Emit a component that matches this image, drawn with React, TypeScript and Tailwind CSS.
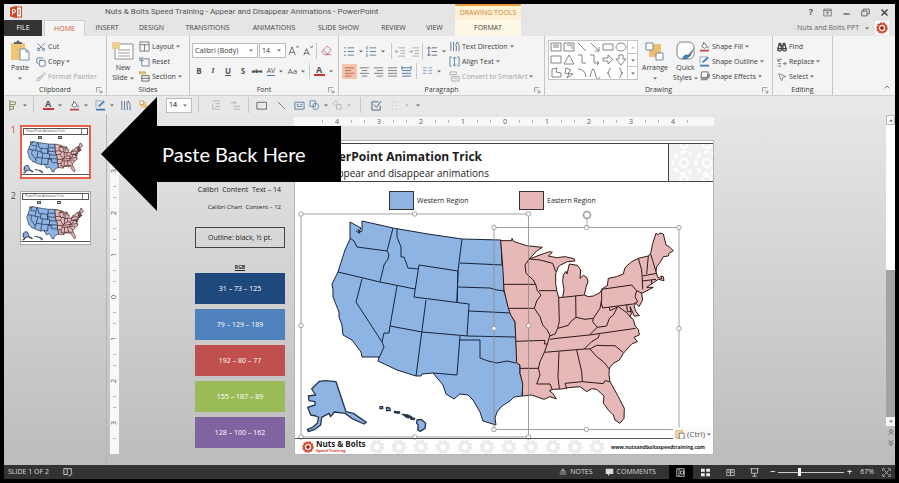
import React from 'react';
import { Binoculars, Brush, ChevronUp, Copy, Eraser, MousePointer2, Scissors } from 'lucide-react';

const TABS = ["INSERT", "DESIGN", "TRANSITIONS", "ANIMATIONS", "SLIDE SHOW", "REVIEW", "VIEW"];
const TAB_WIDTHS = ["w-[44px]", "w-[45px]", "w-[67px]", "w-[66px]", "w-[63px]", "w-[47px]", "w-[35px]"];

const SWATCHES = [
  { label: "31 – 73 – 125", color: "bg-[#1f497d]" },
  { label: "79 – 129 – 189", color: "bg-[#4f81bd]" },
  { label: "192 – 80 – 77", color: "bg-[#c0504d]" },
  { label: "155 – 187 – 89", color: "bg-[#9bbb59]" },
  { label: "128 – 100 – 162", color: "bg-[#8064a2]" }
];

const WEST_OUTLINE =
  "M350,222 L361,228 359,232 362,231 362,221 393,228 428,234 462,239 501,240 502,264 504,266 504,291 508,305 511,315 515,322 516,337 517,363 520,365 520,373 523,383 522,396 514,397 510,401 502,406 497,412 495,418 496,425 483,421 480,412 473,400 468,395 460,394 454,399 446,394 443,385 433,373 422,374 421,376 416,376 397,370 378,361 379,357 362,357 361,352 352,340 343,335 342,325 339,317 339,312 337,307 333,297 333,290 332,284 338,272 345,250 350,239 Z";

const WEST_BORDERS = [
  "M350,238 L354,241 357,247 372,249 387,251",
  "M393,228 L387,251 389,254 388,259 384,265 380,282",
  "M338,272 L380,282 415,289",
  "M362,279 L356,302 382,342",
  "M397,286 L390,326 389,333 384,333 382,342 384,347 379,358",
  "M390,326 L422,332 468,336 515,337",
  "M426,300 L416,376",
  "M397,229 L397,237 401,247 401,257 404,257 408,268 418,269",
  "M419,265 L458,271 457,302 M419,265 L414,297 469,304 467,336",
  "M462,239 L458,271",
  "M460,263 L503,265",
  "M458,287 L490,288 497,290 504,291",
  "M469,311 L511,313",
  "M460,336 L457,375 433,373",
  "M460,340 L480,340 480,358 488,361 497,363 507,361 516,363",
  "M458,271 L457,302",
  "M358,229 L360,234 M356,231 L359,233"
];

const EAST_OUTLINE =
  "M32,122 L65,122 66,115 70,124 88,130 110,137 157,142 140,153 118,177 150,165 178,155 187,157 175,168 200,173 225,170 252,176 255,183 232,185 212,195 205,200 200,214 197,220 197,250 201,275 206,292 218,292 222,270 218,245 220,225 228,214 231,222 238,192 262,196 272,210 270,235 280,226 290,232 294,245 288,262 283,285 295,290 310,288 330,278 337,266 352,257 355,235 380,230 400,222 405,203 425,185 445,175 475,168 482,160 488,130 498,100 505,104 510,99 520,102 528,135 537,140 550,152 537,160 535,168 520,170 512,185 500,200 498,215 503,232 515,236 512,228 520,230 522,242 505,238 490,248 470,262 490,262 465,275 455,280 458,300 447,320 438,310 432,318 438,335 448,347 432,348 425,330 420,320 424,342 420,350 430,358 435,378 445,388 448,405 432,412 442,425 425,432 400,460 388,480 370,490 358,505 357,525 360,545 385,590 403,625 402,655 390,670 375,660 370,645 355,630 340,610 342,588 320,568 305,566 290,575 270,560 235,563 215,567 190,568 178,572 188,580 199,597 180,590 162,598 125,585 97,588 98,550 90,520 90,495 80,488 77,410 75,365 62,345 55,325 42,270 38,195 Z";

const EAST_BORDERS = [
  "M40,253 L137,253 M55,325 L133,325 M77,424 L165,421 163,432 172,432 M90,505 L145,505",
  "M118,177 L105,195 108,220 130,240 137,253 142,272 153,285 140,303 133,325 150,350 158,375 170,388 180,405 172,432 163,457 150,485 145,505 150,525 140,552 180,552 187,570",
  "M118,177 L150,180 188,190 197,215 M147,272 L200,272",
  "M206,292 L208,365 203,385 195,402 180,408 M257,287 L258,352 M218,292 L283,285",
  "M335,268 L335,300 330,325 310,355 308,365 322,382 298,405",
  "M203,385 L235,376 242,365 258,352 285,358 310,355",
  "M335,268 L425,255 440,272 435,290 443,305 430,312 338,324 333,305 M440,272 L457,280",
  "M445,175 L455,210 457,240 458,268 M475,168 L470,222 M482,162 L498,215",
  "M457,228 L500,220 M457,243 L498,238 M485,240 L485,253",
  "M322,382 L350,378 358,355 370,345 382,322 M358,322 L360,332 385,320 410,338 425,355 M410,312 L412,335 425,335",
  "M180,418 L200,415 298,405 437,385",
  "M163,457 L283,447 300,447 320,436 345,437 375,437 400,458 M283,447 L305,425 325,413 328,403",
  "M300,447 L320,470 340,485 358,507 M207,455 L204,530 208,567 M260,450 L275,515 277,545",
  "M230,565 L225,550 277,545 340,551 345,542 360,545"
];

function StatesMap({ weight = 1 }: { weight?: number }) {
  return (
    <g strokeLinejoin="round">
      <g fill="#8eb4e3" stroke="#17243a" strokeWidth={weight}>
        <path d={WEST_OUTLINE} />
        {WEST_BORDERS.map((d) => <path key={d} d={d} fill="none" />)}
      </g>
      <g transform="translate(490 200) scale(.33333)" fill="#e6b9b8" stroke="#2e1717" strokeWidth={weight * 3}>
        <path d={EAST_OUTLINE} />
        {EAST_BORDERS.map((d) => <path key={d} d={d} fill="none" />)}
      </g>
      {/* Alaska and Hawaii */}
      <g transform="translate(290 290) scale(.33333)" fill="#8eb4e3" stroke="#24344d" strokeWidth={weight * 4}>
        <path d="M88,274 L105,272 138,275 168,365 190,370 229,397 222,402 185,385 165,370 133,366 122,380 117,370 95,382 92,405 75,418 55,425 52,418 68,412 82,400 86,382 78,378 62,375 53,352 75,345 75,335 57,332 55,318 77,315 65,297 Z" />
        <path d="M270,350h8v6h-8zM289,352l10,2 2,8-11,0zM313,364l16,2-2,4-13-2zM337,373l16,2-3,4zM345,379l12,0-2,5zM357,376l14,10-8,2zM364,385l10,0-2,4zM381,390l12-2 14,12-2,15-15,9-7,-5 2-13-5-7z" />
      </g>
    </g>
  );
}

function Selection({ x, y, w, h }: { x: number; y: number; w: number; h: number }) {
  const handles = [[0, 0], [w / 2, 0], [w, 0], [0, h / 2], [w, h / 2], [0, h], [w / 2, h], [w, h]];
  return (
    <g transform={`translate(${x} ${y})`} fill="none" stroke="#8a8a8a" strokeWidth="0.8">
      <rect width={w} height={h} />
      {handles.map(([hx, hy], i) => <circle key={i} cx={hx} cy={hy} r="2.2" fill="#fff" />)}
    </g>
  );
}

function HeaderGears() {
  return (
    <svg className="h-full w-full" aria-hidden="true">
      <defs>
        <pattern id="gears-top" width="23" height="36" patternUnits="userSpaceOnUse">
          <rect width="23" height="36" fill="#f1f1f1" />
          <g fill="none" stroke="#fff">
            <circle cx="15" cy="19" r="4" strokeWidth="2" />
            <circle cx="15" cy="19" r="11" strokeWidth="3" strokeDasharray="5 3" />
            <circle cx="15" cy="0" r="4" strokeWidth="2" />
            <circle cx="15" cy="36" r="4" strokeWidth="2" />
          </g>
        </pattern>
      </defs>
      <rect width="100%" height="100%" fill="url(#gears-top)" />
    </svg>
  );
}

function FooterGears() {
  return (
    <svg className="h-full w-full" aria-hidden="true">
      <defs>
        <pattern id="gears-bottom" width="22" height="16" patternUnits="userSpaceOnUse">
          <g fill="none" stroke="#ebebeb">
            <circle cx="11" cy="8" r="4.500" strokeWidth="3" />
            <circle cx="11" cy="8" r="6.500" strokeWidth="2" strokeDasharray="3 2" />
          </g>
        </pattern>
      </defs>
      <rect width="100%" height="100%" fill="url(#gears-bottom)" />
    </svg>
  );
}

function Icon({ children, className = "size-3" }: { children: React.ReactNode; className?: string }) {
  return (
    <svg viewBox="0 0 12 12" className={`shrink-0 ${className}`} fill="none" stroke="#666" strokeWidth="1" aria-hidden="true">
      {children}
    </svg>
  );
}

function Caret({ className = "" }: { className?: string }) {
  return (
    <svg viewBox="0 0 4 3" className={`h-[3px] w-1 shrink-0 ${className}`} aria-hidden="true">
      <path d="M0,0.500H4L2,2.500Z" fill="#666" />
    </svg>
  );
}

function Launcher() {
  return (
    <Icon className="size-[7px]"><path d="M1,9V1H9M5,5L10,10M10,6V10H6" /></Icon>
  );
}

function Group({ label, width, launcher, children }: { label: string; width: string; launcher?: boolean; children: React.ReactNode }) {
  return (
    <section aria-label={label} className={`flex shrink-0 flex-col border-r border-[#c6c6c6] ${width}`}>
      <div className="flex h-[49px] pt-[3px]">{children}</div>
      <div className="relative flex h-[10px] items-center justify-center">
        {label}
        {launcher && <button aria-label={`${label} options`} className="absolute right-[3px]"><Launcher /></button>}
      </div>
    </section>
  );
}

function Row({ icon, label, caret, muted }: { icon: React.ReactNode; label: string; caret?: boolean; muted?: boolean }) {
  return (
    <button className={`flex h-[15px] items-center gap-[2px] whitespace-nowrap ${muted ? "text-[#a3a3a3]" : ""}`}>
      {icon}
      {label}
      {caret && <Caret />}
    </button>
  );
}

function BigButton({ icon, lines, width }: { icon: React.ReactNode; lines: string[]; width: string }) {
  return (
    <button className={`flex shrink-0 flex-col items-center ${width}`}>
      <span className="flex h-6 items-center">{icon}</span>
      {lines.map((line, i) => (
        <span key={line} className="flex h-[10px] items-center gap-[2px] whitespace-nowrap">
          {line}
          {i === 1 && <Caret />}
        </span>
      ))}
      {lines.length === 1 && <span className="flex h-[10px] items-center"><Caret /></span>}
    </button>
  );
}

function Tool({ label, width = "w-[14px]", children }: { label: string; width?: string; children: React.ReactNode }) {
  return <button aria-label={label} className={`flex h-4 shrink-0 items-center justify-center gap-1 ${width}`}>{children}</button>;
}

function Divider({ className = "mx-1" }: { className?: string }) {
  return <span className={`h-4 w-px shrink-0 bg-[#c9c9c9] ${className}`} />;
}

function Lines({ d, color = "#777" }: { d: string; color?: string }) {
  return <Icon className="size-[11px]"><path d={d} stroke={color} /></Icon>;
}

function Combo({ label, value, width }: { label: string; value: string; width: string }) {
  return (
    <div className={`relative flex h-[15px] shrink-0 items-center border border-[#bcbcbc] bg-white ${width}`}>
      <select aria-label={label} defaultValue={value} className="w-full appearance-none bg-transparent pl-[2px] outline-none">
        <option>{value}</option>
      </select>
      <Caret className="absolute right-1" />
    </div>
  );
}

function FillIcon() {
  return <Icon className="size-[11px]"><path d="M3,6L6,2L9,6L6,8Z M5,3V1" fill="#fff" /><path d="M10,6V8" stroke="#3f6fa8" /><path d="M1,10.500H11" stroke="#c0504d" strokeWidth="2" /></Icon>;
}

function OutlineIcon() {
  return <Icon className="size-[11px]"><path d="M1,1H9M1,1V8" stroke="#91a4bb" /><path d="M4,7L10,1.500" stroke="#3f7fbd" strokeWidth="2" /><path d="M1,10.500H11" stroke="#3f7fbd" strokeWidth="2" /></Icon>;
}

function FontColor() {
  return (
    <span className="flex flex-col items-center text-[9px] leading-[8px] font-bold text-[#555]">A<span className="h-[2px] w-[11px] bg-[#d3302a]" /></span>
  );
}

function TitleBar() {
  return (
    <header className="flex h-4 bg-[#e5e5e5]">
      <div className="flex w-20 items-center pl-[6px]">
        <svg viewBox="0 0 12 12" className="size-3" aria-hidden="true">
          <rect x="4" y="1" width="7.500" height="10" fill="#fff" stroke="#d24726" />
          <path d="M0,1.500L7,0V12L0,10.500Z" fill="#d24726" />
          <path d="M2.500,9V3.500H4A1.500,1.500 0 0 1 4,6.500H2.500" fill="none" stroke="#fff" />
          <path d="M8,4H10M8,6H10M8,8H10" stroke="#d24726" />
        </svg>
      </div>
      <h1 className="flex flex-1 items-center pl-[21px] font-['Roboto',sans-serif] text-[8px] whitespace-nowrap text-[#555]">Nuts &amp; Bolts Speed Training - Appear and Disappear Animations - PowerPoint</h1>
      <div className="flex items-center gap-[10px] pr-[6px]">
        <button aria-label="Help" className="text-[9px] leading-3 font-bold text-[#555]">?</button>
        <button aria-label="Ribbon display options"><Icon className="size-[9px]"><path d="M1,1.500H11V10.500H1ZM1,3.500H11M6,9V5M4,7L6,5L8,7" /></Icon></button>
        <button aria-label="Minimize"><Icon className="size-[9px]"><path d="M2,8H10" strokeWidth="2" /></Icon></button>
        <button aria-label="Restore"><Icon className="size-[9px]"><path d="M1,4H8V10.500H1ZM3,4V1.500H11V8H8" strokeWidth="1.300" /></Icon></button>
        <button aria-label="Close"><Icon className="size-[9px]"><path d="M2,2L10,10M10,2L2,10" stroke="#444" strokeWidth="2" /></Icon></button>
      </div>
    </header>
  );
}

function TabBar() {
  return (
    <nav className="flex h-4 bg-[#e5e5e5] text-[#444]">
      <button className="w-[38px] shrink-0 bg-[#333] text-white">FILE</button>
      <button className="ml-[2px] w-[41px] shrink-0 border border-b-0 border-[#cfcfcf] bg-[#f4f4f4] text-[#cf5b30]">HOME</button>
      {TABS.map((tab, i) => (
        <button key={tab} className={`shrink-0 whitespace-nowrap ${TAB_WIDTHS[i]}`}>{tab}</button>
      ))}
      <div className="relative ml-[3px] w-[66px] shrink-0 bg-[#fdf7e6]">
        <div className="absolute inset-x-0 bottom-4 h-4 border-t-2 border-[#eca23c] bg-[#fdf0d5] text-center leading-[14px] whitespace-nowrap text-[#cf8430]">DRAWING TOOLS</div>
        <button className="h-4 w-full">FORMAT</button>
      </div>
      <div className="flex flex-1 items-center justify-end gap-[6px] pr-[6px] whitespace-nowrap text-[#666]">
        Nuts and Bolts PPT <Caret />
        <Target className="size-[14px] bg-white p-px" />
      </div>
    </nav>
  );
}

function Target({ className }: { className: string }) {
  return (
    <svg viewBox="0 0 12 12" className={`shrink-0 ${className}`} aria-hidden="true">
      <circle cx="6" cy="6" r="5" fill="#d9432a" />
      <circle cx="6" cy="6" r="5" fill="none" stroke="#d9432a" strokeWidth="1.500" strokeDasharray="2 1" />
      <circle cx="6" cy="6" r="2.600" fill="none" stroke="#fff" strokeWidth="1.200" />
      <circle cx="6" cy="6" r="1" fill="#5a1c12" />
    </svg>
  );
}

function Ribbon() {
  return (
    <div className="flex h-[60px] border-b border-[#cfcfcf] bg-[#f4f4f4] text-[#3a3a3a]">
      <Group label="Clipboard" width="w-[103px]" launcher>
        <BigButton width="w-[32px]" lines={["Paste"]} icon={
          <svg viewBox="0 0 20 22" className="h-[22px] w-5" aria-hidden="true">
            <path d="M1,3H15V20H1Z" fill="#ecc675" />
            <path d="M4,4V2H6L8,0L10,2H12V4Z" fill="#666" />
            <path d="M10,9H16L19,12V20H10Z" fill="#fff" stroke="#7892ad" />
            <path d="M16,9V12H19" fill="none" stroke="#7892ad" />
          </svg>
        } />
        <div>
          <Row icon={<Scissors size={10} className="-rotate-90 text-[#53718f]" />} label="Cut" />
          <Row icon={<Copy size={10} className="text-[#53718f]" />} label="Copy" caret />
          <Row icon={<Brush size={10} />} label="Format Painter" muted />
        </div>
      </Group>
      <Group label="Slides" width="w-[83px]">
        <BigButton width="w-[32px]" lines={["New", "Slide"]} icon={
          <svg viewBox="0 0 22 20" className="h-5 w-[22px]" aria-hidden="true">
            <path d="M3,3H21V18H3Z" fill="#fff" stroke="#8c8c8c" />
            <path d="M6,9H18M6,12H18M6,15H18" stroke="#999" />
            <path d="M0,1H8V8H0Z" fill="#ecd08d" />
          </svg>
        } />
        <div>
          <Row icon={<Lines d="M1,1H11V11H1ZM1,4H11M6,4V11" />} label="Layout" caret />
          <Row icon={<Lines d="M3,3H11V11H3ZM1,1V5H5M1,4L4,1" color="#66839f" />} label="Reset" />
          <Row icon={<Icon className="size-[11px]"><path d="M3,5H11V11H3ZM3,8H11" /><path d="M0,1H7V3H0Z" fill="#ecc675" stroke="#d0a95a" /></Icon>} label="Section" caret />
        </div>
      </Group>
      <Group label="Font" width="w-[149px]" launcher>
        <div className="flex flex-col gap-[5px] pt-1 pl-[2px]">
          <div className="flex h-[15px] items-center">
            <Combo label="Font" value="Calibri (Body)" width="w-[66px]" />
            <Combo label="Font size" value="14" width="ml-px w-[27px]" />
            <Tool label="Grow font"><Icon className="size-[11px]"><path d="M1,11L4.500,2L8,11M2,8H7M9,3L10.500,1L12,3" /></Icon></Tool>
            <Tool label="Shrink font"><Icon className="size-[11px]"><path d="M2,11L5,4L8,11M3,9H7M9,1L10.500,3L12,1" /></Icon></Tool>
            <Divider className="mx-[2px]" />
            <Tool label="Clear formatting"><Eraser size={11} className="text-[#c8678f]" /></Tool>
          </div>
          <div className="flex h-4 items-center text-[8px] text-[#555]">
            <Tool label="Bold"><b>B</b></Tool>
            <Tool label="Italic"><i className="font-serif font-bold">I</i></Tool>
            <Tool label="Underline" width="w-4"><u className="font-bold">U</u></Tool>
            <Tool label="Shadow"><b>S</b></Tool>
            <Tool label="Strikethrough"><s className="text-[6px] font-bold">abc</s></Tool>
            <Tool label="Character spacing" width="w-[22px]"><span className="border-b border-[#4c7cab] text-[7px] leading-[8px]">AV</span><Caret /></Tool>
            <Tool label="Change case" width="w-[21px]">Aa<Caret /></Tool>
            <Divider className="mx-[2px]" />
            <Tool label="Font color" width="w-[22px]"><FontColor /><Caret /></Tool>
          </div>
        </div>
      </Group>
      <Group label="Paragraph" width="w-[206px]" launcher>
        <div className="flex w-[110px] shrink-0 flex-col gap-1 pt-1 pl-[3px]">
          <div className="flex h-4 items-center">
            <Tool label="Bullets" width="w-[22px]"><Lines d="M4,2H11M4,6H11M4,10H11M0,2H2M0,6H2M0,10H2" color="#5a7da0" /><Caret /></Tool>
            <Tool label="Numbering" width="w-[22px]"><Lines d="M4,2H11M4,6H11M4,10H11M1,0V4M0,6H2M1,8V12" color="#5a7da0" /><Caret /></Tool>
            <Divider className="ml-[5px] mr-px" />
            <Tool label="Decrease indent"><Lines d="M4,2H11M6,5H11M6,8H11M4,11H11M4,6H0M2,4L0,6L2,8" color="#aaa" /></Tool>
            <Tool label="Increase indent"><Lines d="M4,2H11M6,5H11M6,8H11M4,11H11M0,6H4M2,4L4,6L2,8" color="#aaa" /></Tool>
            <Divider className="mx-px" />
            <Tool label="Line spacing" width="w-[24px]"><Lines d="M5,2H11M5,6H11M5,10H11M2,1V11M0,3L2,1L4,3M0,9L2,11L4,9" color="#5d6f82" /><Caret /></Tool>
          </div>
          <div className="flex h-4 items-center">
            <button aria-label="Align left" className="flex h-[15px] w-[15px] items-center justify-center bg-[#f8c4ae]"><Lines d="M1,2H11M1,5H8M1,8H11M1,11H8" color="#a86450" /></button>
            <Tool label="Center"><Lines d="M1,2H11M3,5H9M1,8H11M3,11H9" /></Tool>
            <Tool label="Align right"><Lines d="M1,2H11M4,5H11M1,8H11M4,11H11" /></Tool>
            <Tool label="Justify"><Lines d="M1,2H11M1,5H11M1,8H11M1,11H11" /></Tool>
            <Tool label="Distribute" width="w-[15px]"><Lines d="M1,2H11M1,5H11M1,8H11M1,11H11M1,0V4M11,0V4" color="#47719c" /></Tool>
            <Divider className="mx-[2px]" />
            <Tool label="Columns" width="w-[24px]"><Lines d="M1,2H5M1,5H5M1,8H5M7,2H11M7,5H11M7,8H11" color="#7d9dc0" /><Caret /></Tool>
          </div>
        </div>
        <div>
          <Row icon={<Lines d="M2,1V11M5,1V11M8,5V11M7,5L9,1L11,5V11" color="#5a7290" />} label="Text Direction" caret />
          <Row icon={<Lines d="M3,1H1V11H3M9,1H11V11H9M6,1V11M4,3L6,1L8,3M4,9L6,11L8,9" color="#5a85a8" />} label="Align Text" caret />
          <Row icon={<Lines d="M1,1H8V4H1ZM3,6H11V11H3ZM5,8H9" color="#aaa" />} label="Convert to SmartArt" caret muted />
        </div>
      </Group>
      <Group label="Drawing" width="w-[228px]" launcher>
        <button aria-label="Shapes" className="mt-px ml-[3px] flex h-10 w-[90px] shrink-0 border border-[#c4c4c4] bg-white">
          <svg viewBox="0 0 78 38" className="h-[38px] w-[78px]" fill="none" stroke="#777" strokeWidth="0.900" aria-hidden="true">
            <path d="M2,2H12V10H2ZM4,4H10M4,6H10M15,2H25V10H15ZM18,4H23V8M29,2L37,10M42,2L50,10M50,6V10H46M54,3H64V9H54Z" />
            <ellipse cx="72" cy="6" rx="5" ry="4" />
            <path d="M2,15H12V22H2ZM15,23L20,14L25,23ZM29,14H33V22H37M41,14H45V22H50M48,20L50,22L48,24M54,17H59V14L64,18.500L59,23V20H54ZM70,14H74V18H77L72,24L67,18H70ZM3,28L8,27L7,31L12,32V36H3ZM17,27L22,29L19,32L24,33L18,37L20,33L16,32ZM29,28Q36,28 37,36M41,36Q44,22 46,32T51,36M62,27Q60,27 60,30T58,32Q60,32 60,34T62,37M70,27Q72,27 72,30T74,32Q72,32 72,34T70,37" />
          </svg>
          <span className="flex flex-1 flex-col divide-y divide-[#c4c4c4] border-l border-[#c4c4c4]">
            <span className="flex flex-1 items-center justify-center"><Caret className="rotate-180 opacity-40" /></span>
            <span className="flex flex-1 items-center justify-center"><Caret /></span>
            <span className="flex flex-1 items-center justify-center"><Caret /></span>
          </span>
        </button>
        <BigButton width="w-[34px]" lines={["Arrange"]} icon={
          <svg viewBox="0 0 20 20" className="size-5" aria-hidden="true">
            <path d="M4,3H16V16H4Z" fill="#f0bd72" />
            <path d="M1,2H8V9H1ZM11,12H18V19H11Z" fill="#fff" stroke="#72869a" />
          </svg>
        } />
        <BigButton width="w-[27px]" lines={["Quick", "Styles"]} icon={
          <svg viewBox="0 0 20 20" className="size-5" aria-hidden="true">
            <rect x="1" y="1" width="17" height="17" rx="5" fill="#fff" stroke="#808080" />
            <path d="M19,6L11,15L14,16Z" fill="#777" />
            <path d="M6,18Q8,12 13,14Q14,19 6,18Z" fill="#3e7fb5" />
          </svg>
        } />
        <div>
          <Row icon={<FillIcon />} label="Shape Fill" caret />
          <Row icon={<OutlineIcon />} label="Shape Outline" caret />
          <Row icon={<Icon className="size-[11px]"><path d="M3,1H10L9,7H2Z" fill="#fff" /><path d="M2,9H8L11,6V3" strokeWidth="2" stroke="#888" /></Icon>} label="Shape Effects" caret />
        </div>
      </Group>
      <Group label="Editing" width="w-[60px]">
        <div className="pl-1">
          <Row icon={<Binoculars size={10} className="text-[#444]" strokeWidth={3} />} label="Find" />
          <Row icon={<Icon className="size-[10px]"><path d="M1,2V5H4M1,5Q3,1 6,3M7,8H11M9,6L11,8L9,10M1,8H5M1,11H5" /></Icon>} label="Replace" caret />
          <Row icon={<MousePointer2 size={10} className="text-[#777]" />} label="Select" caret />
        </div>
      </Group>
      <div className="flex flex-1 items-end justify-end p-1">
        <button aria-label="Collapse the ribbon"><ChevronUp size={8} /></button>
      </div>
    </div>
  );
}

function QuickAccess() {
  return (
    <div className="flex h-[18px] items-center bg-[#e8e8e8] pl-[2px]">
      <Tool label="Align" width="w-[22px]"><Lines d="M2,0V12M2,2H8V5H2M2,7H6V10H2" color="#8b8659" /><Caret /></Tool>
      <Divider className="mx-[5px]" />
      <Tool label="Font color" width="w-[26px]"><FontColor /><Caret /></Tool>
      <Tool label="Shape fill" width="w-[26px]"><FillIcon /><Caret /></Tool>
      <Tool label="Shape outline" width="w-[26px]"><OutlineIcon /><Caret /></Tool>
      <Tool label="Text direction" width="w-4"><Lines d="M2,1V11M5,1V11M8,5V11M7,5L9,1L11,5V11" color="#5a7290" /></Tool>
      <Tool label="Arrange" width="w-[23px]"><Icon className="size-[11px]"><path d="M2,2H8V8H2Z" fill="#ecc675" stroke="none" /><path d="M1,1H5V5H1ZM7,7H11V11H7Z" fill="#fff" stroke="#c69c50" /></Icon></Tool>
      <span className="ml-[10px]"><Combo label="Text size" value="14" width="w-[26px]" /></span>
      <Divider className="mx-[6px]" />
      <Tool label="Send backward" width="w-5"><Lines d="M3,1H11M3,4V10H11M6,4H11M6,7H11" color="#b1b1b1" /></Tool>
      <Tool label="Bring forward" width="w-5"><Lines d="M1,3H7M5,1V5M4,7H11M4,10H11" color="#b1b1b1" /></Tool>
      <Divider className="mr-[2px] ml-[3px]" />
      <Tool label="Rectangle" width="w-5"><Lines d="M1,2.500H11.500V10H1Z" color="#666" /></Tool>
      <Tool label="Line" width="w-5"><Lines d="M2,2L10,10" /></Tool>
      <Tool label="Text box" width="w-4"><Lines d="M1,2.500H11V10H1ZM3,5H5M7,5H9M3,7H9" color="#5479a0" /></Tool>
      <Tool label="Merge shapes" width="w-[23px]"><Lines d="M1,1H7V7H1ZM5,4H9L11,7L9,10H5L4,7Z" color="#5f8db7" /><Caret /></Tool>
      <Tool label="Combine shapes" width="w-[22px]"><Lines d="M1,4L4,1L7,4L4,7ZM5,5H10V10H5Z" color="#b4b4b4" /><Caret className="opacity-40" /></Tool>
      <Divider className="mr-1 ml-2" />
      <Tool label="Edit" width="w-[22px]"><Lines d="M10,6V11H1V2H8M3,5L6,8L11,1" color="#46637f" /></Tool>
      <Tool label="Grid" width="w-6"><Lines d="M2,2H3M6,2H7M2,6H3M6,6H7M2,10H3M6,10H7" color="#b4b4b4" /><Caret className="opacity-40" /></Tool>
      <Tool label="Customize toolbar"><Caret /></Tool>
    </div>
  );
}

function Thumbnail({ index, active }: { index: number; active?: boolean }) {
  return (
    <button className={`flex items-start gap-1 text-[9px] leading-[9px] ${active ? "text-[#d24726]" : "text-[#555]"}`}>
      <span className="w-2 text-right">{index}</span>
      <span className={`flex h-[54px] w-[71px] flex-col bg-white ${active ? "border-2 border-[#e8604a]" : "border border-[#aaa]"}`}>
        <span className="m-px flex h-[7px] justify-end border border-[#555] text-[3px] leading-[5px] text-[#444]">
          <span className="flex-1 pl-[2px] text-left">PowerPoint Animation Trick</span>
          <span className="w-[6px] border-l border-[#777]" />
        </span>
        <span className="flex h-[4px] gap-4 pl-4">
          <span className="h-[3px] w-1 border border-[#555] bg-[#8eb4e3]" />
          <span className="h-[3px] w-1 border border-[#555] bg-[#e6b9b8]" />
        </span>
        <svg viewBox="297 212 415 226" className="min-h-0 flex-1" preserveAspectRatio="none" aria-hidden="true">
          <StatesMap weight={4} />
        </svg>
        <span className="mb-[2px] h-px bg-[#555]" />
      </span>
    </button>
  );
}

function Slide() {
  return (
    <article className="relative flex w-[420px] shrink-0 flex-col border border-[#b5b5b5] bg-white pt-[2px] text-[#1c1c1c]">
      <div className="flex h-[39px] border-y border-[#444]">
        <div className="flex w-[187px] flex-col items-end justify-end whitespace-nowrap">
          <h2 className="text-[12px] leading-4 font-bold">PowerPoint Animation Trick</h2>
          <p className="-mr-[7px] text-[10px] leading-4">Using appear and disappear animations</p>
        </div>
        <div className="ml-auto w-[45px] border-l border-[#444]"><HeaderGears /></div>
      </div>
      <div className="flex h-7 items-end text-[7px]">
        <div className="ml-[94px] flex w-[130px] items-center gap-[3px]"><span className="h-[19px] w-[25px] border border-[#333] bg-[#8eb4e3]" />Western Region</div>
        <div className="flex items-center gap-[3px]"><span className="h-[19px] w-[25px] border border-[#333] bg-[#e6b9b8]" />Eastern Region</div>
      </div>
      <svg viewBox="295 210 418 228" className="h-[228px] w-full overflow-visible" role="img" aria-label="Map of the United States">
        <StatesMap />
        <Selection x={301} y={214} w={227.5} h={223} />
        <Selection x={494} y={227.5} w={185} h={202} />
        <g fill="none" stroke="#9a9a9a">
          <circle cx="587" cy="215" r="3.500" strokeWidth="1.500" />
          <path d="M587,219V227" strokeWidth="0.800" />
        </g>
      </svg>
      <footer className="flex h-[16px] items-center border-t border-[#555] pl-[7px]">
        <Target className="size-[12px]" />
        <div className="pl-[2px] font-bold whitespace-nowrap">
          <div className="text-[8px] leading-[9px]">Nuts &amp; Bolts</div>
          <div className="text-[4px] leading-[6px] text-[#d9432a]">Speed Training</div>
        </div>
        <div className="h-full flex-1"><FooterGears /></div>
        <a href="#site" className="pr-2 text-[5px] font-bold">www.nutsandboltsspeedtraining.com</a>
      </footer>
      <button className="absolute right-0 bottom-[13px] flex h-[14px] items-center gap-[2px] bg-[#fafafa] px-[2px] text-[8px] text-[#555]">
        <Icon className="size-[10px]"><path d="M1,2H9V11H1Z" fill="#f0dfa9" stroke="#c8b065" /><path d="M5,5H11V12H5Z" fill="#fff" /></Icon>
        (Ctrl)<Caret />
      </button>
    </article>
  );
}

const H_RULER = ["4", "3", "2", "1", "0", "1", "2", "3", "4"];
const V_RULER = ["3", "2", "1", "0", "1", "2", "3"];

function Workspace() {
  return (
    <main className="flex flex-1 bg-gradient-to-b from-[#e6e6e6] to-[#bcbcbc]">
      <aside className="flex w-[103px] shrink-0 flex-col gap-[12px] border-r border-[#b5b5b5] pt-[11px] pl-1">
        <Thumbnail index={1} active />
        <Thumbnail index={2} />
      </aside>
      <div className="mt-[27px] ml-[3px] flex h-[313px] w-[9px] shrink-0 flex-col items-center bg-[#f8f8f8] pt-[9px] text-[7px] text-[#555]">
        {V_RULER.map((n, i) => (
          <span key={i} className="flex h-[42px] shrink-0 flex-col items-center justify-around">
            <span className="h-px w-[3px] bg-[#b5b5b5]" />
            <span className="-rotate-90">{n}</span>
            <span className="h-px w-[3px] bg-[#b5b5b5]" />
          </span>
        ))}
      </div>
      <div className="flex w-[175px] shrink-0 flex-col items-end pt-[69px] pr-[9px] text-[7px] text-[#222]">
        <p className="pr-1 leading-[14px] whitespace-pre">Calibri  Content  Text – 14</p>
        <p className="pt-[3px] pr-1 text-[6px] leading-[14px] whitespace-pre">Calibri Chart  Content – 12</p>
        <p className="mt-[13px] flex h-[21px] w-[90px] items-center justify-center border border-[#444]">Outline: black, ½ pt.</p>
        <p className="mt-[15px] w-[90px] text-center text-[5px] leading-[9px] font-bold underline">RGB</p>
        <ul className="mt-px flex w-[90px] flex-col gap-[5px] text-white">
          {SWATCHES.map((s) => (
            <li key={s.label} className={`flex h-[31px] items-center justify-center ${s.color}`}>{s.label}</li>
          ))}
        </ul>
      </div>
      <div className="flex flex-col gap-[14px] pt-[3px]">
        <div className="flex h-[9px] w-[420px] items-center bg-[#f8f8f8] pl-[22px] text-[7px] text-[#555]">
          {H_RULER.map((n, i) => (
            <span key={i} className="flex w-[42px] shrink-0 items-center justify-around">
              <span className="h-[3px] w-px bg-[#b5b5b5]" />
              {n}
              <span className="h-[3px] w-px bg-[#b5b5b5]" />
            </span>
          ))}
        </div>
        <Slide />
      </div>
      <div className="ml-auto flex w-[9px] shrink-0 flex-col">
        <button aria-label="Scroll up" className="mt-px flex h-[10px] items-center justify-center border border-[#bbb] bg-[#f8f8f8]"><Caret className="rotate-180" /></button>
        <div className="h-[145px] bg-white" />
        <div className="flex-1 bg-[#a3a3a3]" />
        <button aria-label="Scroll down" className="flex h-[9px] items-center justify-center bg-[#f8f8f8]"><Caret /></button>
        <button aria-label="Previous slide" className="mt-[2px] flex justify-center"><Icon className="size-[8px]"><path d="M3,6L6,2L9,6M3,10L6,6L9,10" strokeWidth="1.500" /></Icon></button>
        <button aria-label="Next slide" className="mt-[3px] mb-[18px] flex justify-center"><Icon className="size-[8px]"><path d="M3,2L6,6L9,2M3,6L6,10L9,6" strokeWidth="1.500" /></Icon></button>
      </div>
    </main>
  );
}

function StatusBar() {
  return (
    <footer className="flex h-[14px] items-center bg-[#333] pl-1 text-[#ddd]">
      <span>SLIDE 1 OF 2</span>
      <button aria-label="Spelling" className="ml-[14px]"><Icon className="size-[10px]"><path d="M1,2H5V9H1ZM5,2H10V7M6,9L8,11L11,7" stroke="#ddd" /></Icon></button>
      <div className="ml-auto flex items-center gap-[3px]"><Icon className="size-[8px]"><path d="M6,1L8,4H4ZM1,6H11M1,9H11" stroke="#ddd" /></Icon><button>NOTES</button></div>
      <div className="ml-3 flex items-center gap-[3px]"><Icon className="size-[9px]"><path d="M1,1H11V8H6L4,11V8H1Z" fill="#ddd" stroke="none" /></Icon><button>COMMENTS</button></div>
      <div className="ml-[13px] flex h-full items-center">
        <button aria-label="Normal view" className="flex h-full w-6 items-center justify-center bg-black"><Icon className="size-[9px]"><path d="M1,1H11V11H1ZM4,1V11M6,4H10V8H6Z" stroke="#eee" /></Icon></button>
        <button aria-label="Slide sorter" className="flex w-[26px] justify-center"><Icon className="size-[9px]"><path d="M0,1H5V5H0ZM7,1H12V5H7ZM0,7H5V11H0ZM7,7H12V11H7Z" fill="#eee" stroke="none" /></Icon></button>
        <button aria-label="Reading view" className="flex w-6 justify-center"><Icon className="size-[9px]"><path d="M1,2H6V10H1ZM6,2H11V10H6ZM2,4H5M2,6H5M7,4H10M7,6H10" stroke="#ccc" /></Icon></button>
        <button aria-label="Slide show" className="flex w-6 justify-center"><Icon className="size-[9px]"><path d="M0,1H12M2,1V7H10V1M6,7V11M3,11H9" stroke="#ddd" /></Icon></button>
      </div>
      <button aria-label="Zoom out" className="ml-[3px] text-[9px] leading-3 font-bold">−</button>
      <input type="range" aria-label="Zoom" defaultValue={31} className="mx-[3px] h-2 w-[66px] appearance-none bg-transparent [&::-webkit-slider-runnable-track]:h-px [&::-webkit-slider-runnable-track]:bg-[#ccc] [&::-webkit-slider-thumb]:-mt-[4px] [&::-webkit-slider-thumb]:h-2 [&::-webkit-slider-thumb]:w-[3px] [&::-webkit-slider-thumb]:appearance-none [&::-webkit-slider-thumb]:bg-white" />
      <button aria-label="Zoom in" className="text-[9px] leading-3 font-bold">+</button>
      <span className="ml-2">67%</span>
      <button aria-label="Fit to window" className="mr-1 ml-2"><Icon className="size-[9px]"><path d="M1,4V1H4M8,1H11V4M11,8V11H8M4,11H1V8M3,3L9,9M9,3L3,9" stroke="#ccc" /></Icon></button>
    </footer>
  );
}

export default function App() {
  return (
    <div className="relative flex min-h-screen flex-col bg-black p-1 font-['Open_Sans',sans-serif] text-[7px] leading-[10px]">
      <TitleBar />
      <TabBar />
      <Ribbon />
      <QuickAccess />
      <Workspace />
      <StatusBar />
      <div className="absolute top-[97px] left-[101px] flex h-[114px] w-[240px] items-center bg-black pl-[61px] font-['Lato',sans-serif] text-[20px] text-white [clip-path:polygon(0_50%,56px_0,56px_29px,100%_29px,100%_85px,56px_85px,56px_100%)]">
        Paste Back Here
      </div>
    </div>
  );
}
